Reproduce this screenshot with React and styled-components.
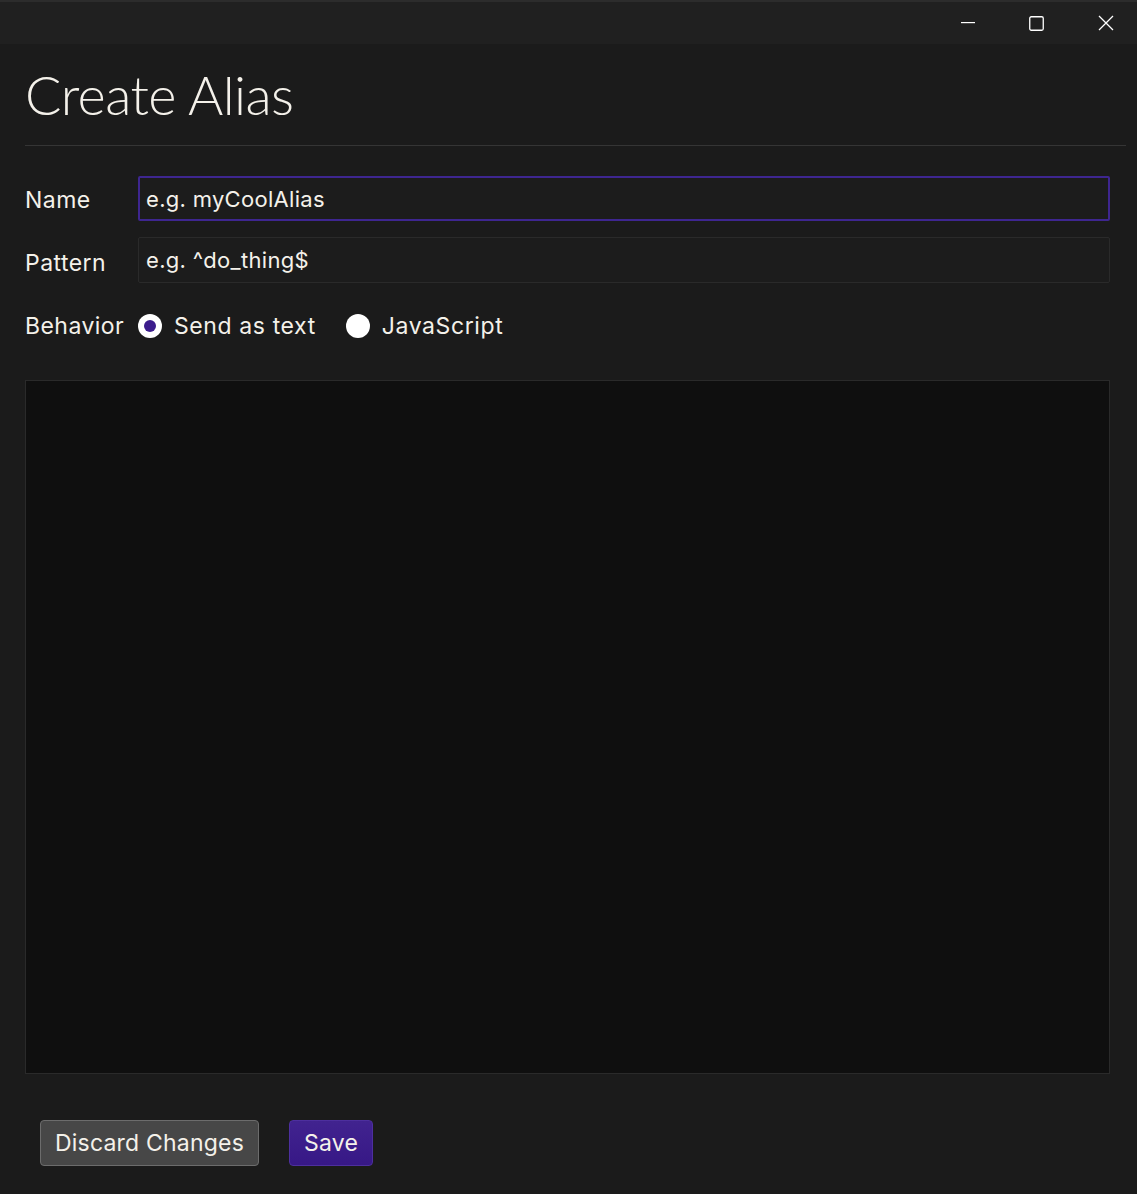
import React from "react";
import styled, { createGlobalStyle } from "styled-components";

const Global = createGlobalStyle`
  html, body { margin: 0; padding: 0; background: #1b1b1b; }
  body { font-family: Inter, "Liberation Sans", sans-serif; color: #f4f1ea; }
  * { box-sizing: border-box; }
`;

const Window = styled.div`
  width: 1137px;
  height: 1194px;
  display: flex;
  flex-direction: column;
  background: #1b1b1b;
`;

const TitleBar = styled.div`
  height: 44px;
  flex: none;
  background: #202020;
  border-top: 2px solid #2c2c2c;
  display: flex;
  justify-content: flex-end;
  align-items: center;
  gap: 54px;
  padding-right: 23px;
`;

const WinIcon = styled.svg`
  display: block;
`;

const Content = styled.div`
  flex: 1;
  display: flex;
  flex-direction: column;
  padding: 0 0 0 25px;
`;

const Heading = styled.h1`
  margin: 0 11px 0 0;
  padding: 20px 0 19px 0;
  font-family: Lato, "Open Sans", sans-serif;
  font-weight: 300;
  font-size: 54px;
  line-height: 62px;
  color: #f4f1ea;
  letter-spacing: -0.6px;
  border-bottom: 1px solid #353535;
`;

const Form = styled.div`
  display: flex;
  flex-direction: column;
  padding-right: 27px;
  padding-top: 30px;
`;

const Row = styled.div`
  display: flex;
  align-items: center;
  height: ${p => p.$h}px;
  margin-bottom: ${p => p.$mb || 0}px;
`;

const Label = styled.div`
  width: 113px;
  flex: none;
  font-size: 23px;
  letter-spacing: 0.45px;
  color: #f4f1ea;
  padding-top: ${p => p.$pt || 0}px;
`;

const Input = styled.input`
  flex: 1;
  height: 100%;
  background: #1c1c1c;
  border: ${p => (p.$focus ? "2px solid #3e2690" : "1px solid #2a2a2a")};
  border-radius: 2px;
  color: #f4f1ea;
  font-family: Inter, "Liberation Sans", sans-serif;
  font-size: 22px;
  letter-spacing: 0.3px;
  padding: 0 0 0 ${p => (p.$focus ? 6 : 7)}px;
  outline: none;
  &::placeholder { color: #f4f1ea; opacity: 1; }
`;

const RadioGroup = styled.div`
  display: flex;
  align-items: center;
  gap: 30px;
`;

const RadioOption = styled.label`
  display: flex;
  align-items: center;
  gap: 12px;
  font-size: 23px;
  letter-spacing: 0.6px;
  color: #f4f1ea;
`;

const RadioDot = styled.span`
  width: 24px;
  height: 24px;
  border-radius: 50%;
  background: #ffffff;
  display: flex;
  align-items: center;
  justify-content: center;
  &::after {
    content: "";
    width: 12px;
    height: 12px;
    border-radius: 50%;
    background: ${p => (p.$checked ? "#3b1c8c" : "transparent")};
  }
`;

const Editor = styled.div`
  margin-top: 27px;
  margin-right: 27px;
  height: 694px;
  flex: none;
  background: #0f0f0f;
  border: 1px solid #2a2a2a;
`;

const Buttons = styled.div`
  display: flex;
  gap: 30px;
  padding: 46px 0 0 15px;
`;

const Button = styled.button`
  height: 46px;
  padding: 0 14px;
  border-radius: 4px;
  font-family: Inter, "Liberation Sans", sans-serif;
  font-size: 23px;
  letter-spacing: 0.2px;
  color: #f4f1ea;
  background: ${p => (p.$primary ? "linear-gradient(#41238f, #371886)" : "#474747")};
  border: 1px solid ${p => (p.$primary ? "#4d2f9e" : "#6c6c6c")};
`;

export default function App() {
  return (
    <Window>
      <Global />
      <TitleBar>
        <WinIcon width="14" height="2" viewBox="0 0 14 2"><rect x="0" y="0" width="14" height="1.2" fill="#fff" /></WinIcon>
        <WinIcon width="15" height="15" viewBox="0 0 15 15"><rect x="0.75" y="0.75" width="13.5" height="13.5" rx="1.5" fill="none" stroke="#fff" strokeWidth="1.3" /></WinIcon>
        <WinIcon width="16" height="16" viewBox="0 0 16 16"><path d="M1 1 L15 15 M15 1 L1 15" stroke="#fff" strokeWidth="1.3" /></WinIcon>
      </TitleBar>
      <Content>
        <Heading>Create Alias</Heading>
        <Form>
          <Row $h={45} $mb={16}>
            <Label $pt={2}>Name</Label>
            <Input $focus placeholder="e.g. myCoolAlias" />
          </Row>
          <Row $h={46} $mb={16}>
            <Label $pt={6}>Pattern</Label>
            <Input placeholder="e.g. ^do_thing$" />
          </Row>
          <Row $h={54}>
            <Label>Behavior</Label>
            <RadioGroup>
              <RadioOption><RadioDot $checked />Send as text</RadioOption>
              <RadioOption><RadioDot />JavaScript</RadioOption>
            </RadioGroup>
          </Row>
        </Form>
        <Editor />
        <Buttons>
          <Button>Discard Changes</Button>
          <Button $primary>Save</Button>
        </Buttons>
      </Content>
    </Window>
  );
}
